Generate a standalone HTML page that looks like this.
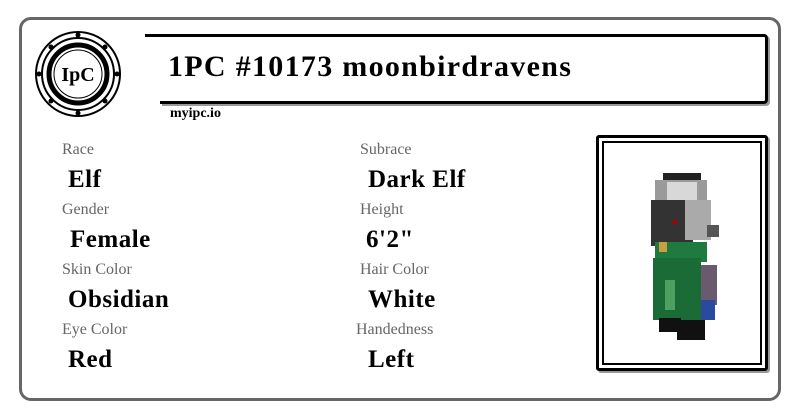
<!DOCTYPE html>
<html><head><meta charset="utf-8"><style>
body{margin:0;width:800px;height:418px;background:#fff;position:relative;overflow:hidden;font-family:"Liberation Serif",serif}
.card{position:absolute;left:19px;top:17px;width:756px;height:378px;border:3px solid #666;border-radius:12px}
.title{position:absolute;left:160px;top:34px;width:605px;height:64px;border:3px solid #000;border-left:none;border-radius:0 4px 4px 0;box-shadow:2px 2px 0 #999}
.tl{position:absolute;left:145px;top:34px;width:20px;height:3px;background:#000}
.tt{position:absolute;left:168px;top:50px;font-size:30px;font-weight:bold;letter-spacing:1.3px}
.url{position:absolute;left:170px;top:106px;font-size:14px;font-weight:bold}
.l{position:absolute;font-size:16px;color:#666}
.v{position:absolute;font-size:25px;font-weight:bold;color:#000;letter-spacing:0.5px}
.frame{position:absolute;left:596px;top:135px;width:166px;height:230px;border:3px solid #000;border-radius:3px;box-shadow:2px 2px 0 #999}
.frame div{position:absolute;left:3px;top:3px;right:3px;bottom:3px;border:2px solid #000}
</style></head><body>
<div class="card"></div>
<svg style="position:absolute;left:33px;top:29px" width="90" height="90" viewBox="0 0 90 90">
<circle cx="45" cy="45" r="42" fill="#fff" stroke="#000" stroke-width="2"/>
<circle cx="45" cy="45" r="36" fill="none" stroke="#000" stroke-width="2"/>
<circle cx="45" cy="45" r="29" fill="none" stroke="#000" stroke-width="5"/>
<circle cx="45" cy="45" r="24" fill="#fff" stroke="#000" stroke-width="1"/>
<g fill="#000"><circle cx="45" cy="6" r="2.5"/><circle cx="45" cy="84" r="2.5"/><circle cx="6" cy="45" r="2.5"/><circle cx="84" cy="45" r="2.5"/><circle cx="18" cy="18" r="2.5"/><circle cx="72" cy="18" r="2.5"/><circle cx="18" cy="72" r="2.5"/><circle cx="72" cy="72" r="2.5"/></g>
<text x="45" y="52" text-anchor="middle" font-family="Liberation Serif" font-size="20" font-weight="bold">IpC</text>
</svg>
<div class="title"></div><div class="tl"></div>
<div class="tt">1PC #10173 moonbirdravens</div>
<div class="url">myipc.io</div>
<div class="l" style="left:62px;top:141px">Race</div><div class="v" style="left:68px;top:166px">Elf</div>
<div class="l" style="left:62px;top:201px">Gender</div><div class="v" style="left:70px;top:226px">Female</div>
<div class="l" style="left:62px;top:261px">Skin Color</div><div class="v" style="left:68px;top:286px">Obsidian</div>
<div class="l" style="left:62px;top:321px">Eye Color</div><div class="v" style="left:68px;top:346px">Red</div>
<div class="l" style="left:360px;top:141px">Subrace</div><div class="v" style="left:368px;top:166px">Dark Elf</div>
<div class="l" style="left:360px;top:201px">Height</div><div class="v" style="left:366px;top:226px">6'2"</div>
<div class="l" style="left:360px;top:261px">Hair Color</div><div class="v" style="left:368px;top:286px">White</div>
<div class="l" style="left:356px;top:321px">Handedness</div><div class="v" style="left:368px;top:346px">Left</div>
<div class="frame"><div></div></div>
<svg style="position:absolute;left:645px;top:170px" width="80" height="175" viewBox="0 0 80 175">
<rect x="18" y="3" width="38" height="10" fill="#222"/>
<rect x="10" y="10" width="52" height="40" fill="#9a9a9a"/>
<rect x="22" y="12" width="30" height="30" fill="#d8d8d8"/>
<rect x="6" y="30" width="42" height="46" fill="#333"/>
<rect x="40" y="30" width="26" height="40" fill="#aaa"/>
<rect x="28" y="50" width="4" height="4" fill="#a00"/>
<rect x="62" y="55" width="12" height="12" fill="#555"/>
<rect x="10" y="72" width="52" height="20" fill="#1e7a3e"/>
<rect x="14" y="72" width="8" height="10" fill="#c9a040"/>
<rect x="8" y="88" width="48" height="62" fill="#1b6b36"/>
<rect x="20" y="110" width="10" height="30" fill="#4fa060"/>
<rect x="56" y="95" width="16" height="40" fill="#6a5a70"/>
<rect x="56" y="130" width="14" height="20" fill="#2a4aa0"/>
<rect x="14" y="148" width="22" height="14" fill="#111"/>
<rect x="32" y="150" width="28" height="20" fill="#111"/>
</svg>
</body></html>
